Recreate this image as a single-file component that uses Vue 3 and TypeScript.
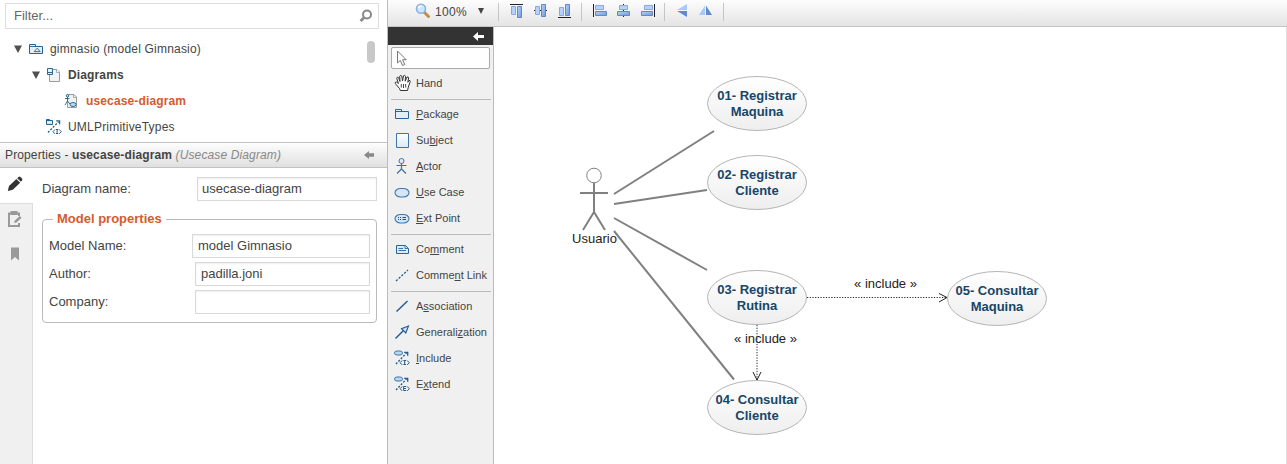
<script setup lang="ts">
interface TreeRow { label: string; icon: string; level: number; open?: boolean; bold?: boolean; active?: boolean }
interface Tool { icon: string; before: string; key: string; after: string }
interface UseCase { cx: number; cy: number; lines: string[] }
interface Line { x1: number; y1: number; x2: number; y2: number }

const tree: TreeRow[] = [
  { label: 'gimnasio (model Gimnasio)', icon: 'model', level: 0, open: true },
  { label: 'Diagrams', icon: 'diagrams', level: 1, open: true, bold: true },
  { label: 'usecase-diagram', icon: 'ucdiagram', level: 2, bold: true, active: true },
  { label: 'UMLPrimitiveTypes', icon: 'import', level: 1 },
]

const toolGroups: Tool[][] = [
  [
    { icon: 'package', before: '', key: 'P', after: 'ackage' },
    { icon: 'subject', before: 'Su', key: 'b', after: 'ject' },
    { icon: 'actor', before: '', key: 'A', after: 'ctor' },
    { icon: 'usecase', before: '', key: 'U', after: 'se Case' },
    { icon: 'extpoint', before: '', key: 'E', after: 'xt Point' },
  ],
  [
    { icon: 'comment', before: 'Co', key: 'm', after: 'ment' },
    { icon: 'commentlink', before: 'Comme', key: 'n', after: 't Link' },
  ],
  [
    { icon: 'association', before: 'A', key: 's', after: 'sociation' },
    { icon: 'generalization', before: 'Generali', key: 'z', after: 'ation' },
    { icon: 'include', before: '', key: 'I', after: 'nclude' },
    { icon: 'extend', before: 'E', key: 'x', after: 'tend' },
  ],
]

const alignGroups: string[][] = [
  ['top', 'middle', 'bottom'],
  ['left', 'center', 'right'],
  ['flipv', 'fliph'],
]

const useCases: UseCase[] = [
  { cx: 757, cy: 103.5, lines: ['01- Registrar', 'Maquina'] },
  { cx: 757, cy: 182.5, lines: ['02- Registrar', 'Cliente'] },
  { cx: 757, cy: 297.5, lines: ['03- Registrar', 'Rutina'] },
  { cx: 757, cy: 407.5, lines: ['04- Consultar', 'Cliente'] },
  { cx: 997, cy: 298.5, lines: ['05- Consultar', 'Maquina'] },
]

const associations: Line[] = [
  { x1: 614, y1: 194, x2: 714, y2: 131 },
  { x1: 614, y1: 204, x2: 707, y2: 190 },
  { x1: 614, y1: 218, x2: 707, y2: 270 },
  { x1: 614, y1: 231, x2: 734, y2: 379.5 },
]
</script>

<template>
  <div class="app">
    <svg class="defs" width="0" height="0">
      <defs>
        <linearGradient id="blue" x1="0" y1="0" x2="1" y2="1">
          <stop offset="0" stop-color="#b5d4ff" /><stop offset="1" stop-color="#6f98d6" />
        </linearGradient>
        <linearGradient id="pale" x1="0" y1="0" x2="0" y2="1">
          <stop offset="0" stop-color="#fff" /><stop offset="1" stop-color="#dbe9f7" />
        </linearGradient>
        <linearGradient id="oval" x1="0" y1="0" x2="0" y2="1">
          <stop offset="0" stop-color="#fff" /><stop offset="1" stop-color="#eee" />
        </linearGradient>
        <symbol id="model" viewBox="0 0 16 16">
          <path d="M1.5 12.5V3.5H7.5V5.5H14.5V12.5Z" fill="#e3f0fa" stroke="#28638f" />
          <path d="M1.5 5.5H8M6.2 10.6L9.2 7.2L12.2 10.6Z" fill="none" stroke="#28638f" stroke-width=".9" />
        </symbol>
        <symbol id="diagrams" viewBox="0 0 16 16">
          <path d="M3.5 2.5H11L13.5 5V14.5H3.5Z" fill="#f3f3f3" stroke="#999" /><path d="M10.5 2.5V5.5H13.5" fill="#fff" stroke="#aaa" />
          <path d="M1.5 1.5H6.5V7.5H1.5ZM1.5 5.5H6.5" fill="#e3f0fa" stroke="#2d6795" />
        </symbol>
        <symbol id="ucdiagram" viewBox="0 0 16 16">
          <path d="M3.5 1.5H10L12.5 4V14.5H3.5Z" fill="#f0f1f2" stroke="#999" /><path d="M9.5 2V4.5H12.5" fill="none" stroke="#aaa" />
          <circle cx="3.5" cy="2.8" r="1.2" fill="#dceaf7" stroke="#28638f" />
          <path d="M3.5 4V8M1 5.5H5.5M3.5 8L1 12M3.5 8L6 11" fill="none" stroke="#28638f" stroke-width=".9" />
          <ellipse cx="9" cy="11.5" rx="3" ry="2" fill="#bedaf3" stroke="#2f70a4" />
        </symbol>
        <symbol id="import" viewBox="0 0 16 16">
          <path d="M.5 5.5V.5H3.5V1.5H6.5V5.5ZM.5 1.5H4" fill="#dceaf7" stroke="#28638f" />
          <path d="M2 13.5L12.5 2.8" stroke="#28638f" stroke-width="1.3" stroke-dasharray="2 1.5" fill="none" />
          <path d="M10.2 1.8H13.6V5.2" stroke="#28638f" stroke-width="1.3" fill="none" />
          <path d="M9 10.5L6.9 12.7L9 14.9M13.2 10.5L15.3 12.7L13.2 14.9M10 10.5H12.2M11.1 10.5V14.5M10 14.5H12.2" stroke="#28638f" fill="none" />
        </symbol>
        <symbol id="package" viewBox="0 0 16 16">
          <path d="M1.5 12.5V3.5H7.5V5.5H14.5V12.5ZM1.5 5.5H8" fill="#e1effa" stroke="#28639b" />
        </symbol>
        <symbol id="subject" viewBox="0 0 16 16"><path d="M2.5 1.5H14.5V15.5H2.5Z" fill="url(#pale)" stroke="#4075ab" /></symbol>
        <symbol id="actor" viewBox="0 0 16 16">
          <circle cx="7.5" cy="3" r="2.5" fill="#dfeefb" stroke="#3f72a5" />
          <path d="M7.5 5.5V11M2.5 7.5H12.5M7.5 11L3 15.5M7.5 11L12 15.5" fill="none" stroke="#3f72a5" stroke-width="1.2" />
        </symbol>
        <symbol id="usecase" viewBox="0 0 16 16"><rect x="1" y="4.5" width="14" height="8.5" rx="5.5" ry="4.2" fill="#d3e7f9" stroke="#4577a8" stroke-width="1.1" /></symbol>
        <symbol id="extpoint" viewBox="0 0 16 16">
          <rect x="1" y="4.5" width="14" height="8.5" rx="5.5" ry="4.2" fill="#d3e7f9" stroke="#4577a8" stroke-width="1.1" />
          <path d="M4 7.5H5M6 7.5H7M8.5 7.5H12M4 9.5H5M6 9.5H7M8.5 9.5H12" stroke="#1f5588" fill="none" />
        </symbol>
        <symbol id="comment" viewBox="0 0 16 16">
          <path d="M2.5 4.5H11.5L14.5 7.5V12.5H2.5Z" fill="#dceafa" stroke="#28639b" />
          <path d="M11 4.5V7.5H14M4.5 7.5H9M4.5 9.5H12" fill="none" stroke="#3b73a8" />
        </symbol>
        <symbol id="commentlink" viewBox="0 0 16 16"><path d="M2 14L14 3" stroke="#275d8f" stroke-width="1.3" stroke-dasharray="2.2 1.5" /></symbol>
        <symbol id="association" viewBox="0 0 16 16"><path d="M2.5 13.5L13.5 3" stroke="#1f5a91" stroke-width="1.4" /></symbol>
        <symbol id="generalization" viewBox="0 0 16 16">
          <path d="M1.5 14.5L10 6" stroke="#1f5a91" stroke-width="1.5" />
          <path d="M14.5 2L7.5 4.7L11.8 9Z" fill="#cfe4f8" stroke="#1f5a91" stroke-width="1.1" />
        </symbol>
        <symbol id="dependency" viewBox="0 0 16 16">
          <rect x=".5" y="1" width="8" height="4" rx="2.5" ry="2" fill="#b9d8f4" stroke="#4577a8" />
          <path d="M2 14L12.5 3" stroke="#245b8f" stroke-width="1.3" stroke-dasharray="2 1.5" />
          <path d="M10.2 2.3H13.7V5.7" fill="none" stroke="#245b8f" stroke-width="1.3" />
          <path d="M8.2 10.5L6.1 12.7L8.2 14.9M13.2 10.5L15.3 12.7L13.2 14.9" stroke="#245b8f" fill="none" />
        </symbol>
        <symbol id="include" viewBox="0 0 16 16"><use href="#dependency" width="16" height="16" /><path d="M9.4 10.5H12M10.7 10.5V14.5M9.4 14.5H12" stroke="#245b8f" fill="none" /></symbol>
        <symbol id="extend" viewBox="0 0 16 16"><use href="#dependency" width="16" height="16" /><path d="M12.2 10.5H9.6V14.5H12.2M9.6 12.5H11.9" stroke="#245b8f" fill="none" /></symbol>
        <symbol id="top" viewBox="0 3 16 16"><path d="M1 4.5H14" stroke="#222" /><path d="M2.5 6.5H6.5V14.5H2.5Z" fill="#b3d2ff" stroke="#83a9e7" /><path d="M8.5 6.5H12.5V17.5H8.5Z" fill="url(#blue)" stroke="#6089c9" /></symbol>
        <symbol id="middle" viewBox="0 3 16 16"><path d="M1 10.5H14" stroke="#222" /><path d="M2.5 6.5H6.5V14.5H2.5Z" fill="#b3d2ff" stroke="#83a9e7" /><path d="M8.5 4.5H12.5V16.5H8.5Z" fill="url(#blue)" stroke="#6089c9" /></symbol>
        <symbol id="bottom" viewBox="0 3 16 16"><path d="M1 17.5H14" stroke="#222" /><path d="M2.5 7.5H6.5V15.5H2.5Z" fill="#b3d2ff" stroke="#83a9e7" /><path d="M8.5 4.5H12.5V15.5H8.5Z" fill="url(#blue)" stroke="#6089c9" /></symbol>
        <symbol id="left" viewBox="0 3 16 16"><path d="M1.5 4V17" stroke="#222" /><path d="M3.5 5.5H11.5V9.5H3.5Z" fill="#b3d2ff" stroke="#83a9e7" /><path d="M3.5 11.5H14.5V15.5H3.5Z" fill="url(#blue)" stroke="#6089c9" /></symbol>
        <symbol id="center" viewBox="0 3 16 16"><path d="M7.5 4V17" stroke="#222" /><path d="M3.5 5.5H11.5V9.5H3.5Z" fill="#b3d2ff" stroke="#83a9e7" /><path d="M1.5 11.5H13.5V15.5H1.5Z" fill="url(#blue)" stroke="#6089c9" /></symbol>
        <symbol id="right" viewBox="0 3 16 16"><path d="M14.5 4V17" stroke="#222" /><path d="M4.5 5.5H12.5V9.5H4.5Z" fill="#b3d2ff" stroke="#83a9e7" /><path d="M1.5 11.5H12.5V15.5H1.5Z" fill="url(#blue)" stroke="#6089c9" /></symbol>
        <symbol id="flipv" viewBox="0 3 16 16"><path d="M12 4V10H2Z" fill="#a7c8fb" /><path d="M12 17V11H2Z" fill="#5f8acb" /></symbol>
        <symbol id="fliph" viewBox="0 3 16 16"><path d="M0 15H6V5.5Z" fill="#a7c8fb" /><path d="M13 15H7V5.5Z" fill="#5f8acb" /></symbol>
      </defs>
    </svg>

    <aside class="side">
      <div class="filter">
        <span>Filter...</span>
        <svg width="14" height="14" viewBox="0 0 14 14"><circle cx="8" cy="5.5" r="4" fill="none" stroke="#888" stroke-width="2" /><path d="M5 8.7L1.5 12" stroke="#888" stroke-width="2.6" /></svg>
      </div>
      <div class="tree">
        <div class="rows">
          <div v-for="row in tree" :key="row.label" class="row" :class="['level' + row.level, { bold: row.bold, active: row.active }]">
            <svg class="twist" width="8" height="8"><path v-if="row.open" d="M0 0.5H8L4 8Z" fill="#505050" /></svg>
            <svg class="icon" width="16" height="16"><use :href="'#' + row.icon" width="16" height="16" /></svg>
            <span>{{ row.label }}</span>
          </div>
        </div>
        <div class="thumb"></div>
      </div>

      <header class="props-head">
        <span>Properties - <b>usecase-diagram</b> <i>(Usecase Diagram)</i></span>
        <svg width="10" height="8"><path d="M0 4L5 0V2.3H10V5.7H5V8Z" fill="#888" /></svg>
      </header>
      <div class="props">
        <nav class="tabs">
          <div class="tab current"><svg width="16" height="16"><path d="M.8 15L2 10L9.4 3L13.2 6.8L5.8 13.8Z M10.2 2.2L11.6.9Q12.5.2 13.4 1L15 2.6Q15.8 3.5 15 4.4L13.9 5.8Z" fill="#333" /></svg></div>
          <div class="tab"><svg width="16" height="17"><path d="M12 5V2.5H2V15H12V12" fill="none" stroke="#999" stroke-width="2" /><path d="M3.5 0H10.5V4H3.5Z" fill="#999" /><path d="M7 12L7.8 9.5L12.8 5L14.6 6.8L9.5 11.5Z" fill="#999" /></svg></div>
          <div class="tab"><svg width="16" height="16"><path d="M4 1.5H12V14.5L8 11L4 14.5Z" fill="#999" /></svg></div>
        </nav>
        <div class="form">
          <div class="field name"><label>Diagram name:</label><div class="input">usecase-diagram</div></div>
          <section class="group">
            <h3>Model properties</h3>
            <div class="field wide"><label>Model Name:</label><div class="input">model Gimnasio</div></div>
            <div class="field"><label>Author:</label><div class="input">padilla.joni</div></div>
            <div class="field"><label>Company:</label><div class="input"></div></div>
          </section>
        </div>
      </div>
    </aside>

    <main class="main">
      <div class="toolbar">
        <svg class="lens" width="16" height="16">
          <path d="M9 9L13.5 13.5" stroke="#c98a45" stroke-width="3" stroke-linecap="round" />
          <circle cx="6" cy="5.8" r="4.5" fill="#cbe7ff" stroke="#8bb1dc" stroke-width="1.6" />
          <path d="M3.5 5.2Q4 3 6.5 3" fill="none" stroke="#fff" stroke-width="1.3" />
        </svg>
        <span class="zoom">100%</span>
        <svg class="drop" width="6" height="6"><path d="M0 0H6L3 6Z" fill="#444" /></svg>
        <div v-for="(group, i) in alignGroups" :key="i" class="aligns">
          <svg v-for="name in group" :key="name" width="16" height="16"><use :href="'#' + name" width="16" height="16" /></svg>
        </div>
        <div class="aligns"></div>
      </div>
      <div class="work">
        <div class="palette">
          <div class="bar"><svg width="11" height="9"><path d="M0 4.5L5 0V3H11V6H5V9Z" fill="#fff" /></svg></div>
          <div class="select"><svg width="12" height="17"><path d="M1.5 1V13L4.3 10.4L6.5 15.5L8.7 14.5L6.6 9.7H10.2Z" fill="#fff" stroke="#777" /></svg></div>
          <div class="tool hand">
            <svg class="icon" width="18" height="18"><path d="M5.5 14.5L1.3 9.5Q.8 7.8 2.5 8L4.5 9.5L2.7 4.2Q3 2.7 4.5 3.5L6 7.5L5.7 2.2Q6.6.8 7.8 2L8.5 7L9.5 1.8Q10.8.8 11.5 2.2L11.2 7.2L13 3Q14.5 2.6 14.6 4L13.8 8.3L15 6.4Q16.4 6.2 16.2 7.7L14.3 13.1L13.5 16.5H6.3Z" fill="#fff" stroke="#333" /><path d="M7.3 10V13.5M9.5 10V14M11.7 10V13.5" stroke="#444" /></svg>
            <span>Hand</span>
          </div>
          <div v-for="(group, i) in toolGroups" :key="i" class="tools">
            <div v-for="tool in group" :key="tool.icon" class="tool">
              <svg class="icon" width="16" height="16"><use :href="'#' + tool.icon" width="16" height="16" /></svg>
              <span>{{ tool.before }}<u>{{ tool.key }}</u>{{ tool.after }}</span>
            </div>
          </div>
        </div>
        <svg class="canvas" width="793" height="437" viewBox="494 27 793 437">
          <g stroke="#808080" stroke-width="2" fill="none">
            <line v-for="(l, i) in associations" :key="i" :x1="l.x1" :y1="l.y1" :x2="l.x2" :y2="l.y2" />
            <path d="M594 183V212M580 193H608M594 212L583 230M594 212L605 230" />
            <circle cx="594" cy="175.5" r="7.3" fill="#fff" stroke-width="1" />
          </g>
          <g stroke="#222" fill="none">
            <path d="M807 297.5H947M757 325V380" stroke-dasharray="1.2 1.5" />
            <path d="M939 293.5L947 297.5L939 302M753 372L757 380L761 372" />
          </g>
          <g v-for="u in useCases" :key="u.lines[0]">
            <ellipse :cx="u.cx" :cy="u.cy" rx="49.5" ry="27" fill="url(#oval)" stroke="#b5b5b5" />
            <text v-for="(t, i) in u.lines" :key="t" class="case" :x="u.cx" :y="u.cy - 3.5 + i * 16">{{ t }}</text>
          </g>
          <text class="note" x="594.5" y="243">Usuario</text>
          <text class="note" x="885.5" y="288">« include »</text>
          <text class="note" x="765.5" y="343">« include »</text>
          <path d="M1286.5 27V464" stroke="#ddd" />
        </svg>
      </div>
    </main>
  </div>
</template>

<style>
body { background: #fff; overflow: hidden; }
</style>

<style scoped>
.app { display: flex; width: 1287px; height: 464px; overflow: hidden; font: 12px/16px "Liberation Sans", Arial, sans-serif; color: #444; }
.app * { box-sizing: border-box; }
.defs { position: absolute; }
svg { display: block; flex: none; }
.side { display: flex; flex-direction: column; width: 388px; flex: none; border-right: 1px solid #bbb; }
.filter { display: flex; align-items: center; justify-content: space-between; margin: 3px 8px 0 5px; height: 26px; padding: 0 5px 0 8px; border: 1px solid #ddd; font-size: 13px; color: #666; }
.tree { display: flex; justify-content: space-between; height: 113px; padding: 7px 12px 0 0; }
.row { display: flex; align-items: center; height: 26px; padding-left: 14px; letter-spacing: .2px; white-space: nowrap; }
.row .icon { margin: 0 6px 0 6px; }
.level1 { padding-left: 32px; }
.level2 { padding-left: 50px; }
.bold { font-weight: bold; letter-spacing: .14px; }
.active { color: #d65a2d; }
.thumb { width: 8px; height: 22px; margin-top: 5px; border-radius: 4px; background: #c8c8c8; }
.props-head { display: flex; align-items: center; justify-content: space-between; height: 26px; padding: 0 13px 0 5px; border: solid #c2c2c2; border-width: 1px 0; background: linear-gradient(#fdfdfd, #e0e0e0); letter-spacing: .13px; white-space: nowrap; }
.props-head i { color: #888; }
.props { display: flex; flex: 1; }
.tabs { width: 33px; background: #f0f0f0; border-right: 1px solid #ddd; }
.tab { height: 35px; padding: 7px 7px; }
.current { width: 33px; height: 36px; padding-top: 8px; background: #fff; border-bottom: 1px solid #ddd; }
.form { flex: 1; padding: 9px 10px 0 9px; font-size: 13px; }
.field { display: flex; align-items: center; justify-content: space-between; height: 28px; }
.input { width: 175px; height: 24px; padding: 3px 5px; border: 1px solid #d9d9d9; box-shadow: inset 0 1px 2px #eee; }
.name { height: 24px; }
.name .input { width: 180px; padding-left: 4px; }
.name label { margin-top: -1px; }
.wide .input { width: 178px; }
.group { height: 104px; margin-top: 18px; padding: 0 6px; border: 1px solid #bbb; border-radius: 4px; }
.group h3 { width: max-content; margin: -9px 0 5px 4px; padding: 0 4px; font: bold 13px/16px "Liberation Sans", Arial, sans-serif; background: #fff; color: #d65a2d; }
.main { flex: 1; display: flex; flex-direction: column; }
.toolbar { display: flex; align-items: center; height: 27px; padding: 0 0 2px 27px; border-bottom: 1px solid #c5c5c5; background: linear-gradient(#fdfdfd, #e4e4e4); }
.lens { margin-top: -2px; }
.zoom { margin: -1px 11px 0 4px; width: 32px; letter-spacing: .3px; }
.drop { margin: -2px 6px 0 0; }
.aligns { display: flex; gap: 8px; height: 18px; margin-left: 8px; padding-left: 10px; border-left: 1px solid #c5c5c5; }
.work { display: flex; }
.palette { width: 106px; height: 437px; border-right: 1px solid #bbb; background: #f0f0f0; font-size: 11px; }
.bar { display: flex; align-items: center; justify-content: flex-end; height: 18px; padding-right: 9px; background: #333; }
.select { display: flex; align-items: center; width: 99px; height: 22px; margin: 2px 3px 0; padding-left: 4px; border: 1px solid #aaa; border-radius: 2px; background: #fff; }
.tool { display: flex; align-items: center; height: 26px; padding-left: 3px; white-space: nowrap; }
.tool .icon { margin-right: 6px; }
.hand { margin: 1px 0 3px 3px; }
.hand .icon { margin-right: 4px; }
.tools { width: 100px; margin-left: 3px; border-top: 1px solid #bbb; padding: 1px 0 3px; }
.case { font-size: 13px; font-weight: bold; fill: #174668; text-anchor: middle; }
.note { font-size: 13px; fill: #222; text-anchor: middle; }
</style>
